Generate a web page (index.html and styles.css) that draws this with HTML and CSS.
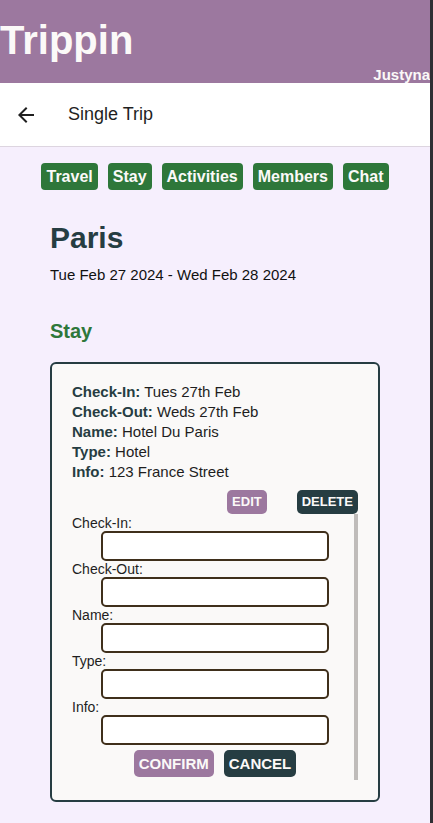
FILE: index.html
```html
<!DOCTYPE html>
<html lang="en">
<head>
<meta charset="utf-8">
<title>Trippin - Single Trip</title>
<link rel="stylesheet" href="styles.css">
</head>
<body>
<div class="app">
  <header class="app-header">
    <h1 class="brand">Trippin</h1>
    <div class="user">Justyna</div>
  </header>
  <div class="toolbar">
    <button class="back" aria-label="Back">
      <svg width="24" height="24" viewBox="0 0 24 24"><path d="M20 11H7.83l5.59-5.59L12 4l-8 8 8 8 1.41-1.41L7.83 13H20v-2z" fill="#1f1f1f"/></svg>
    </button>
    <span class="toolbar-title">Single Trip</span>
  </div>
  <main class="page">
    <nav class="tabs">
      <a class="tab">Travel</a>
      <a class="tab">Stay</a>
      <a class="tab">Activities</a>
      <a class="tab">Members</a>
      <a class="tab">Chat</a>
    </nav>
    <section class="trip">
      <h2 class="trip-title">Paris</h2>
      <p class="trip-dates">Tue Feb 27 2024 - Wed Feb 28 2024</p>
      <h3 class="section-title">Stay</h3>
      <div class="card">
        <div class="info">
          <p><b>Check-In:</b> Tues 27th Feb</p>
          <p><b>Check-Out:</b> Weds 27th Feb</p>
          <p><b>Name:</b> Hotel Du Paris</p>
          <p><b>Type:</b> Hotel</p>
          <p><b>Info:</b> 123 France Street</p>
        </div>
        <div class="card-actions">
          <button class="btn btn-purple">EDIT</button>
          <button class="btn btn-dark">DELETE</button>
        </div>
        <div class="form-scroll">
          <form class="form">
            <label class="field-label">Check-In:</label>
            <input class="field-input" type="text">
            <label class="field-label">Check-Out:</label>
            <input class="field-input" type="text">
            <label class="field-label">Name:</label>
            <input class="field-input" type="text">
            <label class="field-label">Type:</label>
            <input class="field-input" type="text">
            <label class="field-label">Info:</label>
            <input class="field-input" type="text">
            <div class="form-actions">
              <button type="button" class="btn btn-lg btn-purple">CONFIRM</button>
              <button type="button" class="btn btn-lg btn-dark">CANCEL</button>
            </div>
          </form>
          <div class="scrollbar"></div>
        </div>
      </div>
    </section>
  </main>
</div>
</body>
</html>
```

FILE: styles.css
```css
html {
  background: #2f2f33;
  margin: 0;
}
body {
  margin: 0;
  width: 430px;
  min-height: 823px;
  background: #f6effd;
  font-family: "Liberation Sans", Arial, sans-serif;
}
.app {
  display: flex;
  flex-direction: column;
}
.app-header {
  background: #9c789f;
  padding-top: 18px;
  height: 83px;
  box-sizing: border-box;
}
.brand {
  margin: 0;
  font-size: 40px;
  line-height: 44px;
  font-weight: bold;
  color: #fbf9f8;
}
.user {
  margin-top: 4px;
  text-align: right;
  font-size: 15px;
  line-height: 17px;
  font-weight: bold;
  color: #fbf9f8;
}
.toolbar {
  height: 63px;
  background: #ffffff;
  border-bottom: 1px solid #ddd5e0;
  display: flex;
  align-items: center;
  padding-left: 14px;
  gap: 30px;
}
.back {
  border: 0;
  background: none;
  padding: 0;
  width: 24px;
  height: 24px;
  display: flex;
}
.toolbar-title {
  font-size: 18px;
  color: #1f1f1f;
}
.page {
  padding-top: 16px;
}
.tabs {
  display: flex;
  justify-content: center;
  gap: 10px;
}
.tab {
  background: #2e773a;
  color: #fbf9f8;
  font-weight: bold;
  font-size: 16px;
  line-height: 19px;
  padding: 4px 5px;
  border-radius: 4px;
}
.trip {
  padding-left: 50px;
}
.trip-title {
  margin: 31px 0 0;
  font-size: 30px;
  line-height: 34px;
  color: #263d42;
}
.trip-dates {
  margin: 11px 0 0;
  font-size: 15px;
  line-height: 18px;
  color: #111111;
}
.section-title {
  margin: 35px 0 0;
  font-size: 20px;
  line-height: 24px;
  color: #2e773a;
}
.card {
  margin-top: 19px;
  width: 330px;
  box-sizing: border-box;
  border: 2px solid #263d42;
  border-radius: 6px;
  background: #faf9f8;
  padding: 18px 20px 20px;
}
.info p {
  margin: 0;
  font-size: 15px;
  line-height: 20px;
  color: #1e1e1e;
}
.info b {
  color: #263d42;
}
.card-actions {
  margin-top: 8px;
  display: flex;
  justify-content: flex-end;
  gap: 30px;
}
.btn {
  border: 0;
  border-radius: 5px;
  font-family: "Liberation Sans", Arial, sans-serif;
  font-weight: bold;
  font-size: 13px;
  line-height: 16px;
  padding: 4px 5px;
  color: #fbf9f8;
}
.btn-lg {
  font-size: 15px;
  line-height: 19px;
}
.btn-purple {
  background: #9c789f;
}
.btn-dark {
  background: #263d42;
}
.form-scroll {
  display: flex;
}
.form {
  flex: 1;
  display: flex;
  flex-direction: column;
  align-items: flex-start;
  padding: 1px 0 3px;
}
.field-label {
  font-size: 14px;
  line-height: 16px;
  color: #1e1e1e;
}
.field-input {
  margin-left: 29px;
  width: 228px;
  height: 30px;
  box-sizing: border-box;
  border: 2px solid #3f2f1b;
  border-radius: 5px;
  background: #ffffff;
}
.form-actions {
  margin-top: 5px;
  align-self: stretch;
  display: flex;
  justify-content: center;
  gap: 10px;
  padding-left: 4px;
}
.scrollbar {
  width: 4px;
  background: #bfbcba;
}
```
